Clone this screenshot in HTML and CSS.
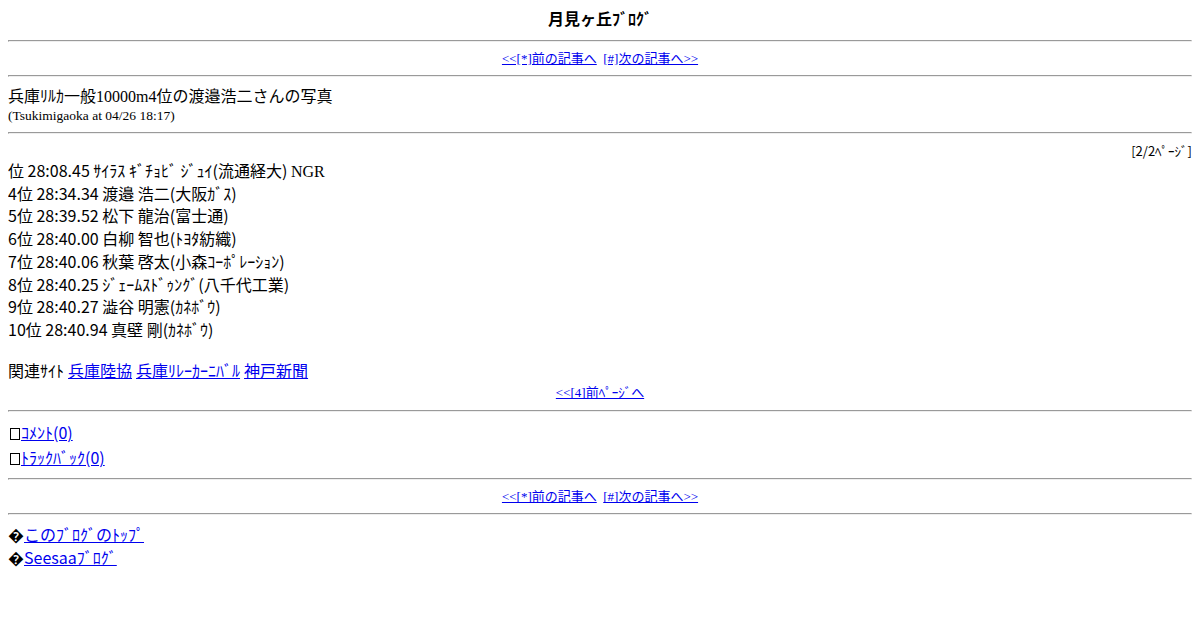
FILE: index.html
```html
<!DOCTYPE html>
<html lang="ja">
<head>
    <meta charset="UTF-8">
    <title>月見ヶ丘ﾌﾞﾛｸﾞ</title>
    <link rel="stylesheet" href="styles.css">
</head>
<body>
    <div class="blog-title">月見ヶ丘ﾌﾞﾛｸﾞ</div>
    <hr>
    <div class="nav"><a href="#">&lt;&lt;[*]前の記事へ</a>&nbsp; <a href="#">[#]次の記事へ&gt;&gt;</a></div>
    <hr>

    <div class="entry-title">兵庫ﾘﾙｶ一般10000m4位の渡邉浩二さんの写真</div>
    <div class="entry-meta">(Tsukimigaoka at 04/26 18:17)</div>
    <hr>

    <div class="page-no">[2/2ﾍﾟｰｼﾞ]</div>
    <div class="results">
        位 28:08.45 ｻｲﾗｽ ｷﾞﾁｮﾋﾞ ｼﾞｭｲ(流通経大) <span class="latin">NGR</span><br>
        4位 28:34.34 渡邉 浩二(大阪ｶﾞｽ)<br>
        5位 28:39.52 松下 龍治(富士通)<br>
        6位 28:40.00 白柳 智也(ﾄﾖﾀ紡織)<br>
        7位 28:40.06 秋葉 啓太(小森ｺｰﾎﾟﾚｰｼｮﾝ)<br>
        8位 28:40.25 ｼﾞｪｰﾑｽﾄﾞｩﾝｸﾞ(八千代工業)<br>
        9位 28:40.27 澁谷 明憲(ｶﾈﾎﾞｳ)<br>
        10位 28:40.94 真壁 剛(ｶﾈﾎﾞｳ)
    </div>
    <div class="related">関連ｻｲﾄ <a href="#">兵庫陸協</a> <a href="#">兵庫ﾘﾚｰｶｰﾆﾊﾞﾙ</a> <a href="#">神戸新聞</a></div>
    <div class="nav nav-page"><a href="#">&lt;&lt;[4]前ﾍﾟｰｼﾞへ</a></div>
    <hr>

    <div class="feedback"><span class="box"></span><a href="#">ｺﾒﾝﾄ(0)</a></div>
    <div class="feedback"><span class="box"></span><a href="#">ﾄﾗｯｸﾊﾞｯｸ(0)</a></div>
    <hr>
    <div class="nav"><a href="#">&lt;&lt;[*]前の記事へ</a>&nbsp; <a href="#">[#]次の記事へ&gt;&gt;</a></div>
    <hr>

    <div class="footer-link">&#xFFFD;<a href="#">このﾌﾞﾛｸﾞのﾄｯﾌﾟ</a></div>
    <div class="footer-link">&#xFFFD;<a href="#">Seesaaﾌﾞﾛｸﾞ</a></div>
</body>
</html>
```

FILE: styles.css
```css
body {
    font-family: "Liberation Serif", "Noto Sans CJK JP", serif;
    font-size: 16px;
    color: #000;
    background-color: #fff;
}
a {
    color: #0000ee;
}
hr {
    margin: 8px 0;
}
.blog-title {
    text-align: center;
    font-weight: bold;
    line-height: 24px;
}
.nav {
    text-align: center;
    font-size: 13px;
    line-height: 17px;
}
.nav-page {
    line-height: 19px;
}
.entry-title {
    line-height: 23px;
}
.entry-meta {
    font-size: 13.5px;
    line-height: 16px;
}
.page-no {
    text-align: right;
    font-size: 13px;
    line-height: 17px;
    font-family: "Noto Sans CJK JP", sans-serif;
}
.results {
    font-family: "Noto Sans CJK JP", sans-serif;
    line-height: 22.7px;
}
.results .latin {
    font-family: "Liberation Serif", serif;
    line-height: 0;
}
.related {
    margin-top: 20px;
    line-height: 22.7px;
}
.feedback {
    line-height: 25px;
    font-family: "Noto Sans CJK JP", sans-serif;
}
.box {
    display: inline-block;
    width: 8px;
    height: 10px;
    border: 1px solid #000;
    vertical-align: -1px;
    margin-left: 2px;
    margin-right: 1px;
}
.footer-link {
    line-height: 23px;
    font-family: "Noto Sans CJK JP", sans-serif;
}
```
